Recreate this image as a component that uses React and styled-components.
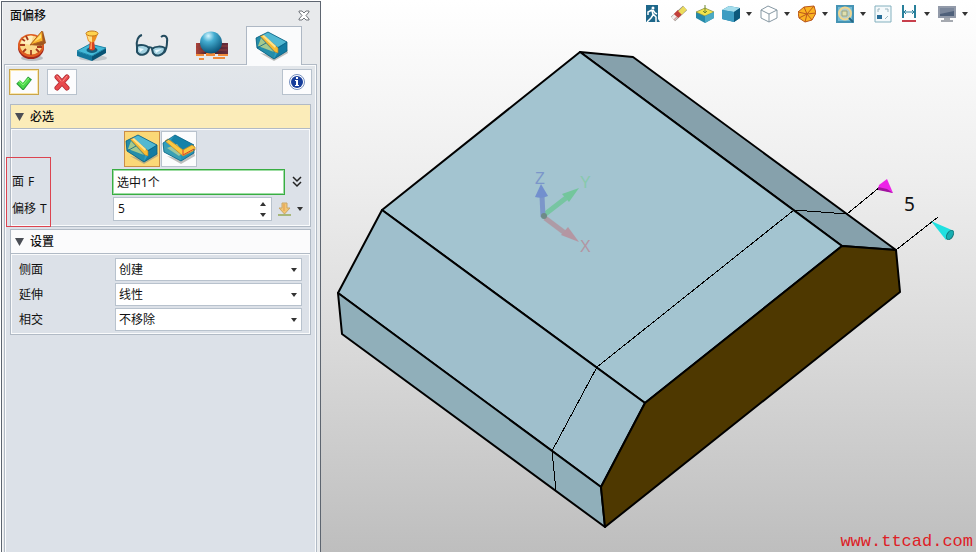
import React, { useState } from "react";
import styled, { createGlobalStyle, css } from "styled-components";

const GlobalStyle = createGlobalStyle`
  *, *::before, *::after { box-sizing: border-box; }
  body { margin: 0; }
  body, button, input, select {
    font-family: "Noto Sans", "Noto Sans CJK SC", sans-serif;
    font-size: 12px;
    line-height: 16px;
    color: #111;
  }
  button { padding: 0; border: 0; background: none; cursor: pointer; }
  svg { display: block; }
`;

const Page = styled.div`
  display: grid;
  grid-template-columns: 321px minmax(0, 1fr);
  min-height: 100vh;
`;

/* ---------- side panel ---------- */

const Panel = styled.aside`
  position: relative;
  display: flex;
  flex-direction: column;
  background: #e8eaec;
  border: 1px solid #5d6570;
  border-bottom: 0;
  box-shadow: inset 1px 0 #f4f5f6;
  margin: 1px 0 0 1px;
`;

const TitleBar = styled.header`
  display: flex;
  align-items: center;
  justify-content: space-between;
  height: 24px;
  padding: 3px 10px 0 8px;
`;

const Title = styled.h1`
  margin: 0;
  font-size: 12px;
  font-weight: 500;
`;

const Tabs = styled.nav`
  display: flex;
  gap: 4px;
  padding-left: 4px;
`;

const Tab = styled.button`
  display: grid;
  place-items: center;
  width: 56px;
  height: 39px;
  padding-right: 4px;
  margin-bottom: -1px;
  border: 1px solid transparent;
  border-bottom: 0;
  ${(p) => p.$active && css`
    position: relative;
    background: #fafbfc;
    border-color: #aeb8c4;
  `}
`;

const PanelBody = styled.section`
  flex: 1;
  display: flex;
  flex-direction: column;
  margin: 0 3px 0 2px;
  padding: 4px 4px 0 4px;
  border: 1px solid #b1bac5;
  border-bottom: 0;
  box-shadow: inset 1px 1px #fafbfc, inset -1px 0 #fafbfc;
  background: linear-gradient(#e2e6ea 0, #dce1e8 60px);
`;

const ActionBar = styled.div`
  display: flex;
  gap: 8px;
  margin-bottom: 9px;
`;

const SquareButton = styled.button`
  display: grid;
  place-items: center;
  width: 30px;
  height: 26px;
  background: #fcfcfd;
  border: 1px solid #b8c2cd;
  ${(p) => p.$default && css`
    border-color: #c9a54c;
    box-shadow: inset 0 0 0 1px #fbe7ad;
  `}
  ${(p) => p.$end && css`margin-left: auto;`}
`;

const Group = styled.section`
  margin: 0 1px 2px 1px;
  border: 1px solid #b1bac5;
`;

const GroupHeader = styled.button`
  display: flex;
  align-items: center;
  gap: 6px;
  width: 100%;
  height: 24px;
  padding: 0 4px;
  font-weight: 500;
  border-bottom: 1px solid #b1bac5;
  background: ${(p) => (p.$highlight ? "#fbecb9" : "#fbfbfc")};
`;

const GroupBody = styled.div`
  display: flex;
  flex-direction: column;
  gap: 2px;
  padding: 1px 6px 4px 0;
  border: 1px solid #fafbfc;
`;

const SettingsBody = styled(GroupBody)`
  padding: 3px 7px 2px 7px;
`;

const ModeButtons = styled.div`
  display: flex;
  gap: 1px;
  padding-left: 112px;
`;

const ModeButton = styled.button`
  display: grid;
  place-items: center;
  width: 36px;
  height: 36px;
  background: ${(p) => (p.$active ? "#fbd877" : "#fbfcfd")};
  border: 1px solid ${(p) => (p.$active ? "#c98d48" : "#b8c2cd")};
`;

const Row = styled.div`
  display: grid;
  grid-template-columns: 100px minmax(0, 1fr);
  align-items: center;
`;

const SettingRow = styled(Row)`
  grid-template-columns: 96px minmax(0, 1fr);
`;

const Label = styled.label`
  display: flex;
  gap: 4px;
`;

const FieldLine = styled.div`
  display: flex;
  align-items: center;
  gap: 6px;
`;

const PickInput = styled.input`
  flex: 1;
  min-width: 0;
  height: 26px;
  padding: 0 4px;
  background: #fff;
  border: 1px solid #39ad43;
  box-shadow: inset 0 0 0 1px #9fdda4;
  outline: 0;
`;

const Spinner = styled.div`
  flex: 1;
  display: flex;
  min-width: 0;
  height: 24px;
  margin-left: 1px;
  background: #fff;
  border: 1px solid #b8c2cd;
`;

const SpinnerInput = styled.input`
  flex: 1;
  min-width: 0;
  padding: 0 4px;
  border: 0;
  background: none;
  outline: 0;
`;

const SpinnerSteps = styled.div`
  display: grid;
  grid-template-rows: 1fr 1fr;
  width: 16px;
  button { display: grid; place-items: center; }
`;

const IconButton = styled.button`
  display: flex;
  align-items: center;
  justify-content: center;
  gap: 6px;
  min-width: 12px;
`;

const SelectBox = styled.div`
  display: grid;
  align-items: center;
  select, svg { grid-area: 1 / 1; }
  svg { justify-self: end; margin-right: 5px; pointer-events: none; }
`;

const Select = styled.select`
  appearance: none;
  width: 100%;
  height: 23px;
  padding: 0 16px 0 3px;
  background: #fff;
  border: 1px solid #b8c2cd;
  border-radius: 0;
  outline: 0;
`;

const Highlight = styled.div`
  position: absolute;
  left: 4px;
  top: 155px;
  width: 45px;
  height: 70px;
  border: 1px solid #dc4450;
  pointer-events: none;
`;

/* ---------- 3D view ---------- */

const Viewport = styled.main`
  display: grid;
  grid-template-rows: minmax(0, 1fr);
  min-width: 0;
  background: linear-gradient(#fff 0%, #eeeeee 32%, #d8d8d8 65%, #bebebe 100%);
  > * { grid-area: 1 / 1; }
`;

const ViewTools = styled.div`
  z-index: 1;
  align-self: start;
  display: flex;
  justify-content: flex-end;
  gap: 8px;
  padding: 5px 8px 0 0;
`;

const ToolButton = styled.button`
  display: flex;
  align-items: center;
  gap: 6px;
  height: 18px;
`;

const Scene = styled.svg`
  width: 100%;
  height: 100%;
  min-height: 0;
`;

const Dimension = styled.text`
  font: 19px "Noto Sans", sans-serif;
  fill: #111;
`;

const AxisName = styled.text`
  font: 16px "Liberation Sans", sans-serif;
`;

const Watermark = styled.a`
  z-index: 1;
  align-self: end;
  justify-self: end;
  padding: 0 3px 0 0;
  font: 17px/20px "Liberation Mono", monospace;
  color: #de2026;
  text-decoration: none;
`;

/* ---------- icons ---------- */

const Caret = ({ up }) => (
  <svg width="6" height="4" viewBox="0 0 6 4" aria-hidden="true">
    <path d={up ? "M0 4h6L3 0z" : "M0 0h6L3 4z"} fill="#333" />
  </svg>
);

const Fold = () => (
  <svg width="9" height="8" viewBox="0 0 9 8" aria-hidden="true">
    <path d="M0 0h9L4.500 8z" fill="#4b4e55" />
  </svg>
);

const CloseIcon = () => (
  <svg width="12" height="11" viewBox="0 0 12 11" aria-hidden="true">
    <path d="M1 1h3l2 2 2-2h3v1L8 5.500l3 3.500v1H8L6 8l-2 2H1V9l3-3.500L1 2z" fill="#fff" stroke="#70757b" />
  </svg>
);

const DialIcon = () => (
  <svg width="30" height="32" viewBox="0 0 30 32" aria-hidden="true">
    <ellipse cx="15" cy="28" rx="11" ry="3" fill="#b9bec4" />
    <ellipse cx="14" cy="17.500" rx="13" ry="11.500" fill="#a3271c" />
    <ellipse cx="14" cy="15.500" rx="13" ry="11.500" fill="#df5c20" />
    <ellipse cx="14" cy="15" rx="11" ry="9.500" fill="#fbd98a" />
    <path d="M4 13a10 9 0 0 1 12-7l-2 9z" fill="#fff0bf" />
    <path d="M9 6l2 4M14 20v5M3 15h5M20 17h5M5 9l3 2M6 22l3-3M22 22l-3-3" stroke="#a63a1d" strokeWidth="1.800" />
    <path d="M13 15L26 1l3 12-5 3z" fill="#a0571f" />
    <path d="M13 15L25 1l1 10z" fill="#fcb92e" stroke="#b3641f" />
    <path d="M17 12l7-8v4z" fill="#ffe27b" />
  </svg>
);

const StampIcon = () => (
  <svg width="32" height="32" viewBox="0 0 32 32" aria-hidden="true">
    <ellipse cx="17" cy="28" rx="14" ry="3" fill="#c3c8cc" />
    <path d="M1 21l15 5v5L1 26z" fill="#13769c" />
    <path d="M16 26l14-8v5l-14 8z" fill="#095475" />
    <path d="M1 21l13-7 16 4-14 8z" fill="#43b9d8" stroke="#1d86a8" strokeLinejoin="round" />
    <ellipse cx="16" cy="20" rx="5.500" ry="3" fill="#155f7d" />
    <path d="M14 10h4l1 9q-3 3-6 0z" fill="#d8401f" />
    <path d="M15 11h1v8h-2z" fill="#ff9a57" />
    <path d="M10 4l2 7q4 3 7 0l3-7z" fill="#ed8f20" />
    <path d="M11 5l2 6 3 1V5z" fill="#ffe086" />
    <ellipse cx="16" cy="3.500" rx="6" ry="2.500" fill="#ffd34d" stroke="#c27a1d" />
  </svg>
);

const GlassesIcon = () => (
  <svg width="34" height="28" viewBox="0 0 34 28" fill="none" aria-hidden="true">
    <path d="M7 3C3 4 1 9 2 15M26 5c4-3 7 0 6 5 0 3-1 8-3 11" stroke="#234b5e" strokeWidth="2" />
    <path d="M2 14c3-2 10-1 12 2-1 7-9 9-12 4zM17 17c3-3 10-3 13-1 0 7-9 10-12 5z" fill="#a3d1e0" stroke="#214d61" strokeWidth="2" />
    <path d="M13 16q2-2 5 1" stroke="#214d61" strokeWidth="2" />
    <path d="M4 16l5 1-4 3zM20 18l7-1-6 4z" fill="#e8f9ff" />
  </svg>
);

const SphereIcon = () => (
  <svg width="34" height="30" viewBox="0 0 34 30" aria-hidden="true">
    <defs>
      <radialGradient id="ball" cx="38%" cy="20%" r="80%">
        <stop offset="0" stopColor="#d6f6ff" />
        <stop offset=".35" stopColor="#44add1" />
        <stop offset="1" stopColor="#095277" />
      </radialGradient>
      <linearGradient id="brick">
        <stop offset="0" stopColor="#b0433a" />
        <stop offset=".4" stopColor="#3c2029" />
        <stop offset="1" stopColor="#6b2c3c" />
      </linearGradient>
    </defs>
    <path d="M1 12h32v11H1z" fill="url(#brick)" />
    <path d="M1 16h9M2 20h14M24 15h9M20 19h12" stroke="#93403c" />
    <path d="M1 23h8v2H1zM11 22h9v3h-9zM23 23h10v2H23zM4 27h5v2H4zM18 26h12v2H18z" fill="#f08a3a" />
    <circle cx="16" cy="11.500" r="11" fill="url(#ball)" />
  </svg>
);

const OffsetIcon = ({ corner }) => (
  <svg width="34" height="30" viewBox="0 0 34 30" aria-hidden="true">
    <path d="M5 22l14 8 14-8-1-4-13 7z" fill="#8b8c86" opacity=".55" />
    {corner ? (
      <>
        <path d="M1 9L13 1l19 10v8l-13 8L2 18z" fill="#2b9fc2" />
        <path d="M13 1l19 10-12 6L9 6z" fill="#1682a8" />
        <path d="M1 9l17 12 1 6L2 18z" fill="#3a9fb4" />
        <path d="M5 14l10-4 6 8-4 4z" fill="#9ac7a0" />
        <path d="M19 20l13-6v5l-13 8z" fill="#2494b8" />
        <path d="M3 7l3-2 15 11 9-5 3 2v3l-12 6z" fill="#fbc840" stroke="#c08a2a" strokeWidth=".800" />
        <path d="M21 16v5l11-6" fill="none" stroke="#e0402a" />
        <path d="M1 9L13 1l19 10M1 9l1 9 17 9 13-8v-4" fill="none" stroke="#0c6689" strokeWidth=".800" />
      </>
    ) : (
      <>
        <path d="M1 7L13 1l19 10v9l-13 8L2 17z" fill="#2b9fc2" />
        <path d="M13 1l19 10-9 5L8 4z" fill="#51b8d2" />
        <path d="M23 16l9-5v9l-13 8 4-7z" fill="#127ba2" />
        <path d="M1 7l4-2 15 16-1 7L2 17z" fill="#248da9" />
        <path d="M3 15l3-8 13 14z" fill="#a3c98e" />
        <path d="M5 5l3-1 15 13v5l-3-1z" fill="#f9bd33" stroke="#b08432" strokeWidth=".700" />
        <path d="M7 5l2-1 12 11-1 2z" fill="#ffe28a" />
        <path d="M1 7L13 1l19 10v9l-13 8L2 17zM23 17l9-6M2 17l9-5" fill="none" stroke="#0c5f80" strokeWidth=".800" />
      </>
    )}
  </svg>
);

const CheckIcon = () => (
  <svg width="18" height="16" viewBox="0 0 18 16" fill="none" aria-hidden="true">
    <path d="M3 8l5 5 7-9" stroke="#279a38" strokeWidth="5" />
    <path d="M4 8l4 4 6-7" stroke="#4bd84a" strokeWidth="4" />
    <path d="M4 7l4 4 6-7" stroke="#8bee7e" />
  </svg>
);

const CancelIcon = () => (
  <svg width="18" height="18" viewBox="0 0 18 18" fill="none" strokeLinecap="round" aria-hidden="true">
    <path d="M4 4l10 11M14 4L4 15" stroke="#b02a33" strokeWidth="5" />
    <path d="M4 4l10 11M14 4L4 15" stroke="#e8494c" strokeWidth="3.500" />
    <path d="M4 3l4 5M14 3l-4 5" stroke="#fa8d88" />
  </svg>
);

const InfoIcon = () => (
  <svg width="18" height="18" viewBox="0 0 18 18" aria-hidden="true">
    <circle cx="9" cy="9" r="7.500" fill="#fff" stroke="#7790c0" />
    <circle cx="9" cy="9" r="6" fill="#173d9b" />
    <path d="M8 4h2v2H8zM7 7h3v5h1v1H7v-1h1V8H7z" fill="#fff" />
  </svg>
);

const ExpandIcon = () => (
  <svg width="10" height="12" viewBox="0 0 10 12" fill="none" aria-hidden="true">
    <path d="M1 1l4 4 4-4M1 6l4 4 4-4" stroke="#222" strokeWidth="1.500" />
  </svg>
);

const DownloadIcon = () => (
  <svg width="13" height="14" viewBox="0 0 13 14" aria-hidden="true">
    <path d="M4 1h5v5h3l-5.500 6L1 6h3z" fill="#f2c572" stroke="#c9a666" />
    <path d="M6 2v7" stroke="#e39a4c" />
    <path d="M0 13h13" stroke="#a7b779" strokeWidth="2" />
  </svg>
);

const ToolSvg = ({ children }) => (
  <svg width="18" height="18" viewBox="0 0 18 18" fill="none" aria-hidden="true">{children}</svg>
);

const tools = [
  { name: "退出", art: (
    <>
      <path d="M2 0h12v14l2 3H2z" fill="#1e678a" />
      <path d="M8 5L4 7v3M8 5l1 5-2 3-4 4M9 9l3 3v5M9 5l2 3 2 1" stroke="#fff" strokeWidth="1.500" />
      <circle cx="9" cy="3" r="1.500" fill="#fff" />
    </>
  ) },
  { name: "擦除", art: (
    <>
      <path d="M3 14L15 3" stroke="#8d8a80" strokeWidth="6" />
      <path d="M3 14l4-4" stroke="#f3efec" strokeWidth="5" />
      <path d="M6 11l4-4" stroke="#c23f3a" strokeWidth="6" />
      <path d="M10 8l5-5" stroke="#ecdc5c" strokeWidth="5" />
      <path d="M4 15l3-3" stroke="#d0a2a0" strokeWidth="1.500" />
    </>
  ) },
  { name: "对齐", art: (
    <>
      <path d="M0 7l9-4 9 4v6l-9 5-9-5z" fill="#2689a8" />
      <path d="M0 7l9-4 9 4-9 4z" fill="#f2e34a" stroke="#8d8c3a" strokeWidth=".600" />
      <path d="M9 11l9-4v6l-9 5z" fill="#4baac4" />
      <path d="M9 0v8M7 6l2 2 2-2" stroke="#6f8730" />
    </>
  ) },
  { name: "着色", menu: true, art: (
    <>
      <path d="M0 5l7-4 11 2v10l-6 4-12-3z" fill="#1b7ca3" />
      <path d="M0 5l7-4 11 2-6 4z" fill="#a4ddec" />
      <path d="M0 5l12 2v10L0 14z" fill="#3d9cc2" />
      <path d="M12 7l6-4v10l-6 4z" fill="#0c587b" />
    </>
  ) },
  { name: "线框", menu: true, art: (
    <path d="M1 5l7-4 9 4v8l-8 4-8-4zM1 5l8 4 8-4M9 9v8" fill="#fff" stroke="#8698a3" />
  ) },
  { name: "截面", menu: true, art: (
    <>
      <path d="M0 7l6-5 10-1 2 7-4 7-7 2-6-4z" fill="#fbb321" stroke="#b9561a" />
      <path d="M0 7l9 2 7-8M9 9l9-1M9 9l-2 8M9 9l5 6M9 9L6 2M9 9l-8 4" stroke="#bb581c" />
    </>
  ) },
  { name: "缩放", menu: true, art: (
    <>
      <path d="M1 1h16v16H1z" fill="#74bcd8" stroke="#4694b4" strokeWidth="2" />
      <circle cx="9" cy="8.500" r="6" fill="#b4cdcb" stroke="#f0d690" strokeWidth="2" />
      <path d="M6 6h5v5H6z" fill="#dfdfae" stroke="#9ca37d" />
      <path d="M13 13l4 4" stroke="#286886" strokeWidth="2" />
    </>
  ) },
  { name: "窗口", art: (
    <>
      <path d="M1 1h16v16H1z" fill="#f4f9fb" stroke="#83b0be" />
      <path d="M3 10h5v4H3z" fill="#286e98" />
      <path d="M11 4h3v3M4 7V4h2M14 11l-3 3" stroke="#9bb6c0" />
    </>
  ) },
  { name: "测量", menu: true, art: (
    <>
      <path d="M3 0v13M15 0v13" stroke="#277f9a" strokeWidth="2" />
      <path d="M4 7h10M6 5L4 7l2 2M12 5l2 2-2 2" stroke="#277f9a" />
      <path d="M2 16h14" stroke="#c83f4c" strokeWidth="2" />
    </>
  ) },
  { name: "显示", menu: true, art: (
    <>
      <path d="M0 1h18v12H0z" fill="#929aa9" />
      <path d="M2 3h14v8H2z" fill="#4f607a" />
      <path d="M2 3h14v3L2 9z" fill="#7b879b" />
      <path d="M6 13h6v2h3v2H3v-2h3z" fill="#a5a9b0" />
    </>
  ) },
];

/* ---------- parts ---------- */

const tabs = [
  { name: "历史", Icon: DialIcon },
  { name: "管理", Icon: StampIcon },
  { name: "视图", Icon: GlassesIcon },
  { name: "外观", Icon: SphereIcon },
  { name: "面偏移", Icon: OffsetIcon },
];

const settings = [
  { id: "side", label: "侧面", options: ["创建", "不创建"] },
  { id: "extend", label: "延伸", options: ["线性", "圆形"] },
  { id: "intersect", label: "相交", options: ["不移除", "移除"] },
];

function Model() {
  return (
    <Scene viewBox="321 0 655 552" role="img" aria-label="面偏移预览">
      <g stroke="#000" strokeWidth="2" strokeLinejoin="round">
        <path d="M580 52l53 5 263 193-54-4z" fill="#86a1ac" />
        <path d="M580 52l262 194-197 157-263-193z" fill="#a3c4d0" />
        <path d="M382 210l263 193-44 84-263-194z" fill="#9fbfcc" />
        <path d="M338 293l263 194 4 40-263-193z" fill="#90afba" />
        <path d="M842 246l54 4 4 42-295 235-4-40 44-84z" fill="#4e3800" />
      </g>
      <path d="M847 214l-53-4-197 157-45 84 4 40M847 214l33-27M896 250l42-33" fill="none" stroke="#000" shapeRendering="crispEdges" />
      <path d="M887 179l6 14-15-4 1-4z" fill="#ed22e8" />
      <path d="M878 187l9 2 6 4-15-3z" fill="#a0149e" />
      <path d="M931 221l23 10-8 9z" fill="#20e0e0" />
      <ellipse cx="950" cy="235" rx="3" ry="5" transform="rotate(30 950 235)" fill="#17aeb2" stroke="#14777a" />
      <Dimension x="904" y="211">5</Dimension>
      <g opacity=".85">
        <path d="M544 215l22-17" stroke="#70c69a" strokeWidth="5" />
        <path d="M562 194l17-6-10 14z" fill="#6bc794" />
        <path d="M545 218l20 15" stroke="#b1959f" strokeWidth="5" />
        <path d="M561 235l7-8 11 15z" fill="#b88f9b" />
        <path d="M543 217l-1-21" stroke="#768fc9" strokeWidth="5" />
        <path d="M535 197l6-13 7 12q-6 3-13 1z" fill="#6a86ce" />
        <circle cx="544" cy="216" r="3" fill="#66817c" />
        <AxisName x="535" y="184" fill="#758fc9">Z</AxisName>
        <AxisName x="580" y="188" fill="#84cba7">Y</AxisName>
        <AxisName x="580" y="252" fill="#b68e9b">X</AxisName>
      </g>
    </Scene>
  );
}

export default function App() {
  const [offset, setOffset] = useState(5);
  const [mode, setMode] = useState(0);

  return (
    <>
      <GlobalStyle />
      <Page>
        <Panel>
          <TitleBar>
            <Title>面偏移</Title>
            <IconButton aria-label="关闭"><CloseIcon /></IconButton>
          </TitleBar>
          <Tabs>
            {tabs.map(({ name, Icon }, i) => (
              <Tab key={name} aria-label={name} $active={i === 4}><Icon /></Tab>
            ))}
          </Tabs>
          <PanelBody>
            <ActionBar>
              <SquareButton aria-label="确定" $default><CheckIcon /></SquareButton>
              <SquareButton aria-label="取消"><CancelIcon /></SquareButton>
              <SquareButton aria-label="信息" $end><InfoIcon /></SquareButton>
            </ActionBar>
            <Group>
              <GroupHeader $highlight><Fold />必选</GroupHeader>
              <GroupBody>
                <ModeButtons>
                  {[0, 1].map((m) => (
                    <ModeButton key={m} aria-label={m ? "体偏移" : "面偏移"} $active={mode === m} onClick={() => setMode(m)}>
                      <OffsetIcon corner={m === 1} />
                    </ModeButton>
                  ))}
                </ModeButtons>
                <Row>
                  <Label htmlFor="face"><span>面</span> <span>F</span></Label>
                  <FieldLine>
                    <PickInput id="face" defaultValue="选中1个" />
                    <IconButton aria-label="展开"><ExpandIcon /></IconButton>
                  </FieldLine>
                </Row>
                <Row>
                  <Label htmlFor="offset"><span>偏移</span> <span>T</span></Label>
                  <FieldLine>
                    <Spinner>
                      <SpinnerInput id="offset" value={offset} onChange={(e) => setOffset(e.target.value)} />
                      <SpinnerSteps>
                        <button aria-label="增加" onClick={() => setOffset(Number(offset) + 1)}><Caret up /></button>
                        <button aria-label="减少" onClick={() => setOffset(Number(offset) - 1)}><Caret /></button>
                      </SpinnerSteps>
                    </Spinner>
                    <IconButton aria-label="获取数值"><DownloadIcon /><Caret /></IconButton>
                  </FieldLine>
                </Row>
              </GroupBody>
            </Group>
            <Group>
              <GroupHeader><Fold />设置</GroupHeader>
              <SettingsBody>
                {settings.map((s) => (
                  <SettingRow key={s.id}>
                    <Label htmlFor={s.id}>{s.label}</Label>
                    <SelectBox>
                      <Select id={s.id}>
                        {s.options.map((o) => <option key={o}>{o}</option>)}
                      </Select>
                      <Caret />
                    </SelectBox>
                  </SettingRow>
                ))}
              </SettingsBody>
            </Group>
          </PanelBody>
          <Highlight />
        </Panel>
        <Viewport>
          <Model />
          <ViewTools>
            {tools.map((t) => (
              <ToolButton key={t.name} aria-label={t.name}>
                <ToolSvg>{t.art}</ToolSvg>
                {t.menu && <Caret />}
              </ToolButton>
            ))}
          </ViewTools>
          <Watermark href="#">www.ttcad.com</Watermark>
        </Viewport>
      </Page>
    </>
  );
}
